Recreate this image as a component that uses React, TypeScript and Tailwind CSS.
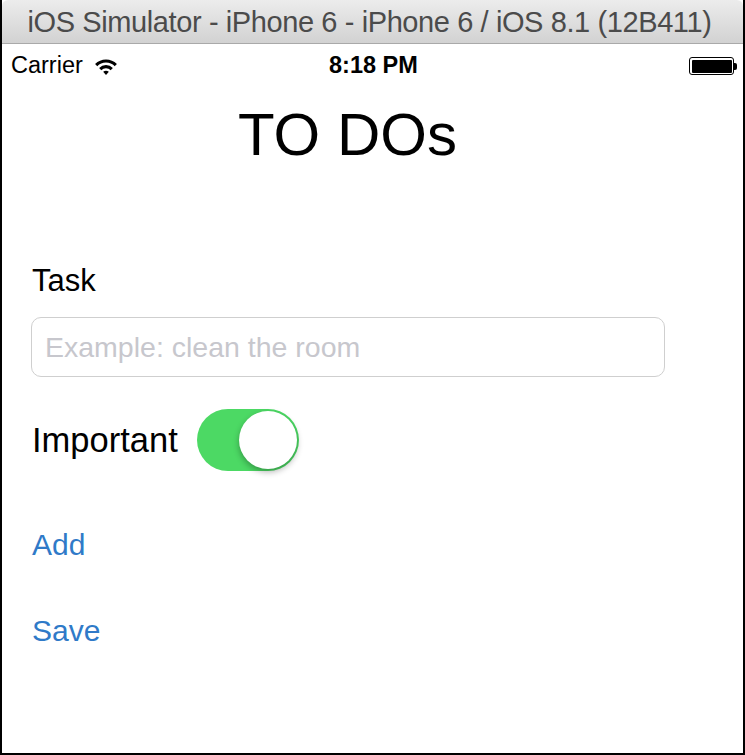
import React from "react";

function Wifi() {
  return (
    <svg width="24" height="19" viewBox="0 0 22 17">
      <path d="M1 6.2 A14 14 0 0 1 21 6.2 L19 8.3 A11 11 0 0 0 3 8.3 Z" fill="#000" />
      <path d="M4.7 9.8 A9 9 0 0 1 17.3 9.8 L15.3 11.9 A6 6 0 0 0 6.7 11.9 Z" fill="#000" />
      <path d="M8.4 13.4 A4 4 0 0 1 13.6 13.4 L11 16.3 Z" fill="#000" />
    </svg>
  );
}

function Battery() {
  return (
    <div className="flex items-center">
      <div className="w-[45px] h-[18px] rounded-[3px] border-[1.5px] border-black p-[1.5px] bg-white">
        <div className="w-full h-full bg-black rounded-[1px]" />
      </div>
      <div className="w-[3px] h-[7px] bg-black rounded-r-[2px]" />
    </div>
  );
}

export default function App() {
  return (
    <div
      className="w-[745px] h-[755px] bg-white border-x-2 border-b-2 border-black flex flex-col overflow-hidden"
      style={{ fontFamily: '"Liberation Sans", Arial, sans-serif' }}
    >
      <div className="h-[44px] shrink-0 rounded-t-[6px] bg-gradient-to-b from-[#ececec] to-[#d2d2d2] border-b border-[#a9a9a9] flex items-center justify-center">
        <span className="text-[29px] text-[#4b4b4b] tracking-[-0.4px] leading-none mt-[1px] -ml-[6px]">
          iOS Simulator - iPhone 6 - iPhone 6 / iOS 8.1 (12B411)
        </span>
      </div>
      <div className="h-[44px] shrink-0 flex items-center justify-between pl-[9px] pr-[6px] relative">
        <div className="flex items-center gap-[11px] text-[23.5px] text-black leading-none">
          <span>Carrier</span>
          <Wifi />
        </div>
        <span className="absolute left-[327px] text-[23.5px] font-bold leading-none">8:18 PM</span>
        <Battery />
      </div>
      <div className="flex flex-col pl-[30px]">
        <div className="text-[60px] leading-none text-black pl-[206px] mt-[17px]">TO DOs</div>
        <div className="text-[31px] leading-none text-black mt-[100px]">Task</div>
        <div className="mt-[21px] -ml-[1px] w-[634px] h-[60px] rounded-[10px] border border-[#cfcfcf] flex items-center pl-[13px]">
          <span className="text-[28.5px] text-[#c7c7cd] leading-none">Example: clean the room</span>
        </div>
        <div className="mt-[32px] flex items-center">
          <span className="text-[34.5px] leading-none text-black">Important</span>
          <div className="ml-[19px] w-[102px] h-[62px] rounded-full bg-[#4cd964] relative">
            <div className="absolute right-[2px] top-[2px] w-[58px] h-[58px] rounded-full bg-white shadow-[0_3px_6px_rgba(0,0,0,0.3)]" />
          </div>
        </div>
        <div className="mt-[59px] text-[30px] leading-none text-[#2f7ac8]">Add</div>
        <div className="mt-[56px] text-[30px] leading-none text-[#2f7ac8]">Save</div>
      </div>
    </div>
  );
}
